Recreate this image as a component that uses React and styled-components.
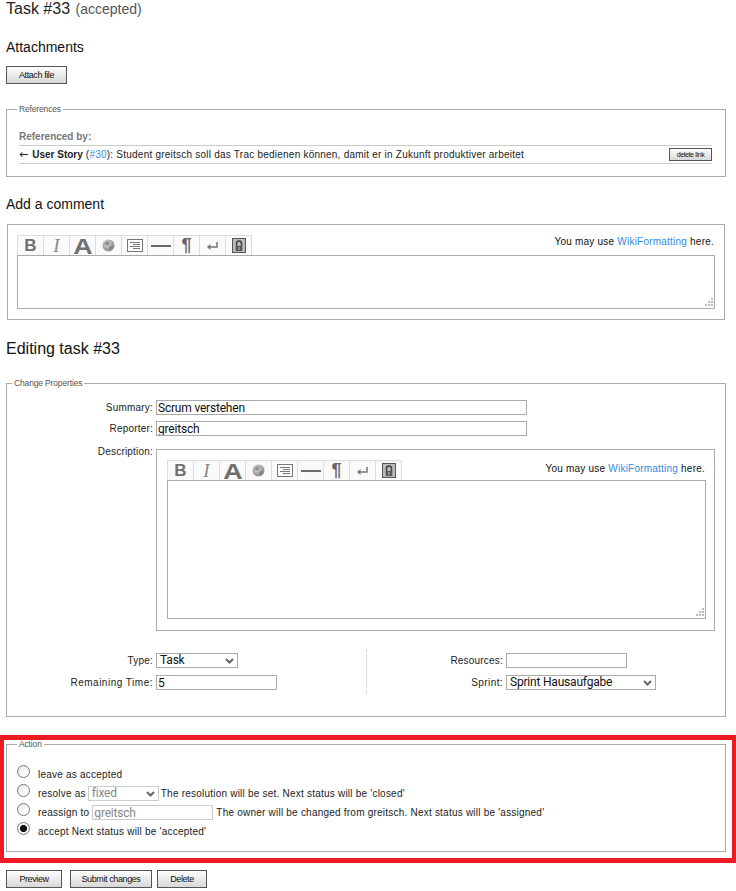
import React from "react";
import styled, { createGlobalStyle } from "styled-components";

const Global = createGlobalStyle`
  html, body { margin: 0; padding: 0; background: #fff; }
  body { font-family: "Liberation Sans", Arial, sans-serif; font-size: 10px; color: #000; }
`;
const Page = styled.div`width: 736px; box-sizing: border-box;`;
const Section = styled.div`margin: 0 10px 0 6px;`;
const Title = styled.h1`
  margin: 0; font-size: 16px; line-height: 18px; font-weight: 400; color: #222;
  small { font-size: 14px; color: #555; margin-left: 1px; }
`;
const Heading = styled.h2`
  margin: ${p => p.$top}px 0 0; font-size: ${p => p.$size || 14}px; line-height: 18px; font-weight: 400; color: #111;
`;
const Btn = styled.button`
  display: block; box-sizing: border-box; width: ${p => p.$w}px; height: ${p => p.$h || 18}px; padding: 0;
  border: 1px solid #555; border-radius: 0; background: linear-gradient(#fdfdfd, #d8d8d8);
  font: 400 ${p => p.$fs || 9}px "Liberation Sans", Arial, sans-serif; letter-spacing: -0.4px; color: #111;
`;
const Box = styled.fieldset`
  box-sizing: border-box; min-width: 0; margin: ${p => p.$top || 0}px ${p => p.$inset || 0}px 0; padding: 0;
  border: 1px solid #aaa; height: ${p => p.$h}px;
`;
const Legend = styled.legend`
  margin-left: ${p => p.$left}px; padding: 0 2px; font-size: 8.5px; line-height: 10px; color: #555; letter-spacing: -0.15px;
`;
const RefBody = styled.div`padding: 16px 13px 0 12px;`;
const RefTitle = styled.div`font-size: 10px; line-height: 14px; font-weight: 700; color: #777;`;
const RefRow = styled.div`
  display: flex; align-items: center; justify-content: space-between; height: 19px; box-sizing: border-box; margin-top: 1px;
  border-top: 1px solid #ccc; border-bottom: 1px solid #ccc; line-height: 16px; letter-spacing: .23px; color: #222;
  b { letter-spacing: 0; } a { color: #3a8ee0; text-decoration: none; }
`;
const Arrow = styled.span`font-family: "DejaVu Sans", sans-serif; font-size: 11px; letter-spacing: 0; margin-right: 1px;`;
const Small = styled(Btn)`font-size: 7px; letter-spacing: -.35px;`;
const Link = styled.a`color: #2f8be0; text-decoration: none;`;
const EditorWrap = styled.div`padding: ${p => p.$pad};`;
const EditorTop = styled.div`display: flex; justify-content: space-between; align-items: center; height: 20px;`;
const Toolbar = styled.div`display: flex; height: 20px; border-top: 1px solid #ddd; box-sizing: border-box; width: 235px; border-left: 1px solid #ddd;`;
const Tool = styled.span`
  display: flex; align-items: center; justify-content: center; width: 26px; box-sizing: border-box; border-right: 1px solid #ddd;
  background: #fafafa; color: ${p => p.$c || "#707070"}; font-family: ${p => p.$serif ? '"Liberation Serif", serif' : '"Liberation Sans", sans-serif'};
  font-size: ${p => p.$fs}px; font-weight: ${p => p.$w || 700}; font-style: ${p => p.$it ? "italic" : "normal"}; line-height: 19px;
`;
const WideGlyph = styled.span`display: block; transform: scaleX(1.22); line-height: 19px; height: 19px; margin-top: 1px;`;
const Hint = styled.span`margin: 0 1px ${p => p.$lift}px 0; letter-spacing: .22px; color: #111; font-size: 10px;`;
const AreaWrap = styled.div`position: relative; height: ${p => p.$h}px;`;
const Area = styled.textarea`display: block; box-sizing: border-box; width: 100%; height: 100%; margin: 0; border: 1px solid #aaa; resize: none; outline: 0; background: #fff;`;
const Grip = styled.svg`position: absolute; right: 2px; bottom: 2px;`;
const FormRow = styled.div`display: flex; align-items: ${p => p.$start ? "flex-start" : "center"}; margin-top: ${p => p.$top || 0}px;`;
const Label = styled.label`
  width: ${p => p.$w || 149}px; flex: none; box-sizing: border-box; text-align: right; padding-right: 3px; letter-spacing: ${p => p.$ls || ".2"}px; color: #222; line-height: 15px;
  margin-top: ${p => p.$lift ? -p.$lift : 0}px;
`;
const Input = styled.input`
  display: block; box-sizing: border-box; width: ${p => p.$w}px; height: ${p => p.$h || 15}px; margin: 0; padding: 0 1px;
  border: 1px solid ${p => p.disabled ? "#ccc" : "#aaa"}; border-radius: 0; outline: 0; background: #fff;
  font: 400 12px Roboto, "Liberation Sans", sans-serif; letter-spacing: -.2px; color: ${p => p.disabled ? "#888" : "#111"};
`;
const SelectBox = styled.span`
  position: relative; display: block; box-sizing: border-box; width: ${p => p.$w}px; height: 15px;
  border: 1px solid ${p => p.$off ? "#ccc" : "#aaa"}; color: ${p => p.$off ? "#888" : "#111"};
  font: 400 12px/12px Roboto, "Liberation Sans", sans-serif; letter-spacing: -.2px; padding-left: 3px; flex: none; background: #fff;
  svg { position: absolute; right: 3px; top: 4px; }
`;
const PropBody = styled.div`padding-top: 12px; padding-right: 10px;`;
const DescBox = styled.div`width: 559px; height: 182px; box-sizing: border-box; border: 1px solid #aaa; flex: none;`;
const Columns = styled.div`display: flex; margin-top: 19px; height: 44px;`;
const Col = styled.div`
  width: ${p => p.$w}px; flex: none; display: flex; flex-direction: column; gap: 7px; padding-top: 3px; box-sizing: border-box;
  border-right: ${p => p.$div ? "1px dotted #ccc" : "0"};
`;
const RedFrame = styled.div`
  box-sizing: border-box; height: 128px; margin-top: ${p => p.$top}px; border: 5px solid #ed1c24; border-left-width: 4px; border-right-width: 4px; padding-left: 2px; padding-right: 6px;
`;
const ActionBody = styled.div`padding: 15px 0 0 10px;`;
const ActionRow = styled.div`display: flex; align-items: center; height: ${p => p.$h}px; letter-spacing: .22px; color: #222; gap: ${p => p.$gap || 3}px;`;
const Radio = styled.input`
  appearance: none; flex: none; width: 13px; height: 13px; margin: 0 ${p => p.$after || 5}px 0 0; position: relative; top: -3px; box-sizing: border-box;
  border: 1px solid #777; border-radius: 50%; background: linear-gradient(135deg, #e4e4e4, #fff 70%);
  &:checked { background: radial-gradient(circle, #111 0 3.2px, #f5f5f5 3.9px); }
`;
const Actions = styled.div`display: flex; margin: 7px 0 0 6px;`;
const ActionBtn = styled(Btn)`margin-right: ${p => p.$gap}px;`;

const Globe = ({ id }) => (
  <svg width="13" height="13" viewBox="0 0 13 13"><defs><radialGradient id={id} cx=".4" cy=".35"><stop offset="0" stopColor="#e4e4e4"/><stop offset="1" stopColor="#999"/></radialGradient></defs><circle cx="6.5" cy="6.500" r="6" fill={`url(#${id})`}/><path d="M2 5l3-3 3 2-2 3zM7 8l4-2 0 3-3 3z" fill="#777" opacity=".7"/></svg>
);
const Lines = () => (
  <svg width="16" height="13" viewBox="0 0 16 13"><rect x=".5" y=".5" width="15" height="12" fill="#fff" stroke="#777"/><path d="M3 3.500h10M6 5.500h7M3 7.500h10M6 9.500h7" stroke="#777"/></svg>
);
const Rule = () => <svg width="20" height="2" viewBox="0 0 20 2"><rect width="20" height="2" fill="#6a6a6a"/></svg>;
const Ret = () => <svg width="11" height="8" viewBox="0 0 11 8"><path d="M10 0v5H2" fill="none" stroke="#777" strokeWidth="1.500"/><path d="M0 5l3.500-3v6z" fill="#777"/></svg>;
const Safe = () => (
  <svg width="14" height="15" viewBox="0 0 14 15"><rect x=".5" y=".5" width="13" height="14" fill="#bbb" stroke="#555"/><path d="M4.500 13V5.500a2.500 2.500 0 0 1 5 0V13" fill="none" stroke="#444" strokeWidth="1.500"/><rect x="4" y="8" width="6" height="5" fill="#555"/><rect x="6.500" y="9" width="1" height="3" fill="#ccc"/></svg>
);
const Chevron = () => <svg width="9" height="6" viewBox="0 0 9 6"><path d="M1 1l3.500 3.500L8 1" fill="none" stroke="#666" strokeWidth="2"/></svg>;
const GripDots = () => (
  <Grip width="9" height="9" viewBox="0 0 9 9"><path d="M7 0h2v2H7zM4 3h2v2H4zM7 3h2v2H7zM1 6h2v2H1zM4 6h2v2H4zM7 6h2v2H7z" fill="#bbb"/></Grip>
);

const Editor = ({ pad, height, lift, id }) => (
  <EditorWrap $pad={pad}>
    <EditorTop>
      <Toolbar>
        <Tool $fs={17}>B</Tool>
        <Tool $fs={19} $serif $it $w={400} $c="#888">I</Tool>
        <Tool $fs={22}><WideGlyph>A</WideGlyph></Tool>
        <Tool><Globe id={id} /></Tool>
        <Tool><Lines /></Tool>
        <Tool><Rule /></Tool>
        <Tool $fs={18} $c="#666">¶</Tool>
        <Tool><Ret /></Tool>
        <Tool><Safe /></Tool>
      </Toolbar>
      <Hint $lift={lift}>You may use <Link href="#">WikiFormatting</Link> here.</Hint>
    </EditorTop>
    <AreaWrap $h={height}>
      <Area aria-label="Text" />
      <GripDots />
    </AreaWrap>
  </EditorWrap>
);

export default function App() {
  return (
    <Page>
      <Global />
      <Section>
        <Title>Task #33 <small>(accepted)</small></Title>
        <Heading $top={20}>Attachments</Heading>
        <Btn $w={61} style={{ marginTop: 10 }}>Attach file</Btn>
        <Box $top={20} $h={73}>
          <Legend $left={10}>References</Legend>
          <RefBody>
            <RefTitle>Referenced by:</RefTitle>
            <RefRow>
              <span><Arrow>←</Arrow> <b>User Story</b> (<a href="#">#30</a>): Student greitsch soll das Trac bedienen können, damit er in Zukunft produktiver arbeitet</span>
              <Small $w={43} $h={13}>delete link</Small>
            </RefRow>
          </RefBody>
        </Box>
        <Heading $top={18}>Add a comment</Heading>
        <Box $top={11} $inset={1} $h={96}>
          <Editor id="g1" pad="10px 9px 0 9px" height={54} lift={7} />
        </Box>
        <Heading $top={20} $size={16}>Editing task #33</Heading>
        <Box $top={20} $h={339}>
          <Legend $left={5}>Change Properties</Legend>
          <PropBody>
            <FormRow><Label>Summary:</Label><Input $w={371} defaultValue="Scrum verstehen" /></FormRow>
            <FormRow $top={6}><Label>Reporter:</Label><Input $w={371} defaultValue="greitsch" /></FormRow>
            <FormRow $top={13} $start>
              <Label $lift={5}>Description:</Label>
              <DescBox><Editor id="g2" pad="10px 8px 0 10px" height={139} lift={4} /></DescBox>
            </FormRow>
            <Columns>
              <Col $w={360} $div>
                <FormRow><Label>Type:</Label><SelectBox $w={82}>Task<Chevron /></SelectBox></FormRow>
                <FormRow><Label $ls=".5">Remaining Time:</Label><Input $w={121} defaultValue="5" /></FormRow>
              </Col>
              <Col $w={300}>
                <FormRow><Label $w={139}>Resources:</Label><Input $w={121} /></FormRow>
                <FormRow><Label $w={139} $ls=".4">Sprint:</Label><SelectBox $w={150}>Sprint Hausaufgabe<Chevron /></SelectBox></FormRow>
              </Col>
            </Columns>
          </PropBody>
        </Box>
      </Section>
      <RedFrame $top={18}>
        <Box $h={113} $top={-1}>
          <Legend $left={10}>Action</Legend>
          <ActionBody>
            <ActionRow $h={20}><Radio type="radio" name="a" aria-label="leave" />leave as accepted</ActionRow>
            <ActionRow $h={19} $gap={2}><Radio type="radio" name="a" aria-label="resolve" $after={6} />resolve as <SelectBox $w={71} $off>fixed<Chevron /></SelectBox> The resolution will be set. Next status will be 'closed'</ActionRow>
            <ActionRow $h={19}><Radio type="radio" name="a" aria-label="reassign" />reassign to <Input $w={121} disabled defaultValue="greitsch" /> The owner will be changed from greitsch. Next status will be 'assigned'</ActionRow>
            <ActionRow $h={19}><Radio type="radio" name="a" defaultChecked aria-label="accept" />accept Next status will be 'accepted'</ActionRow>
          </ActionBody>
        </Box>
      </RedFrame>
      <Actions>
        <ActionBtn $w={56} $gap={8}>Preview</ActionBtn>
        <ActionBtn $w={82} $gap={5}>Submit changes</ActionBtn>
        <ActionBtn $w={50} $gap={0}>Delete</ActionBtn>
      </Actions>
    </Page>
  );
}
